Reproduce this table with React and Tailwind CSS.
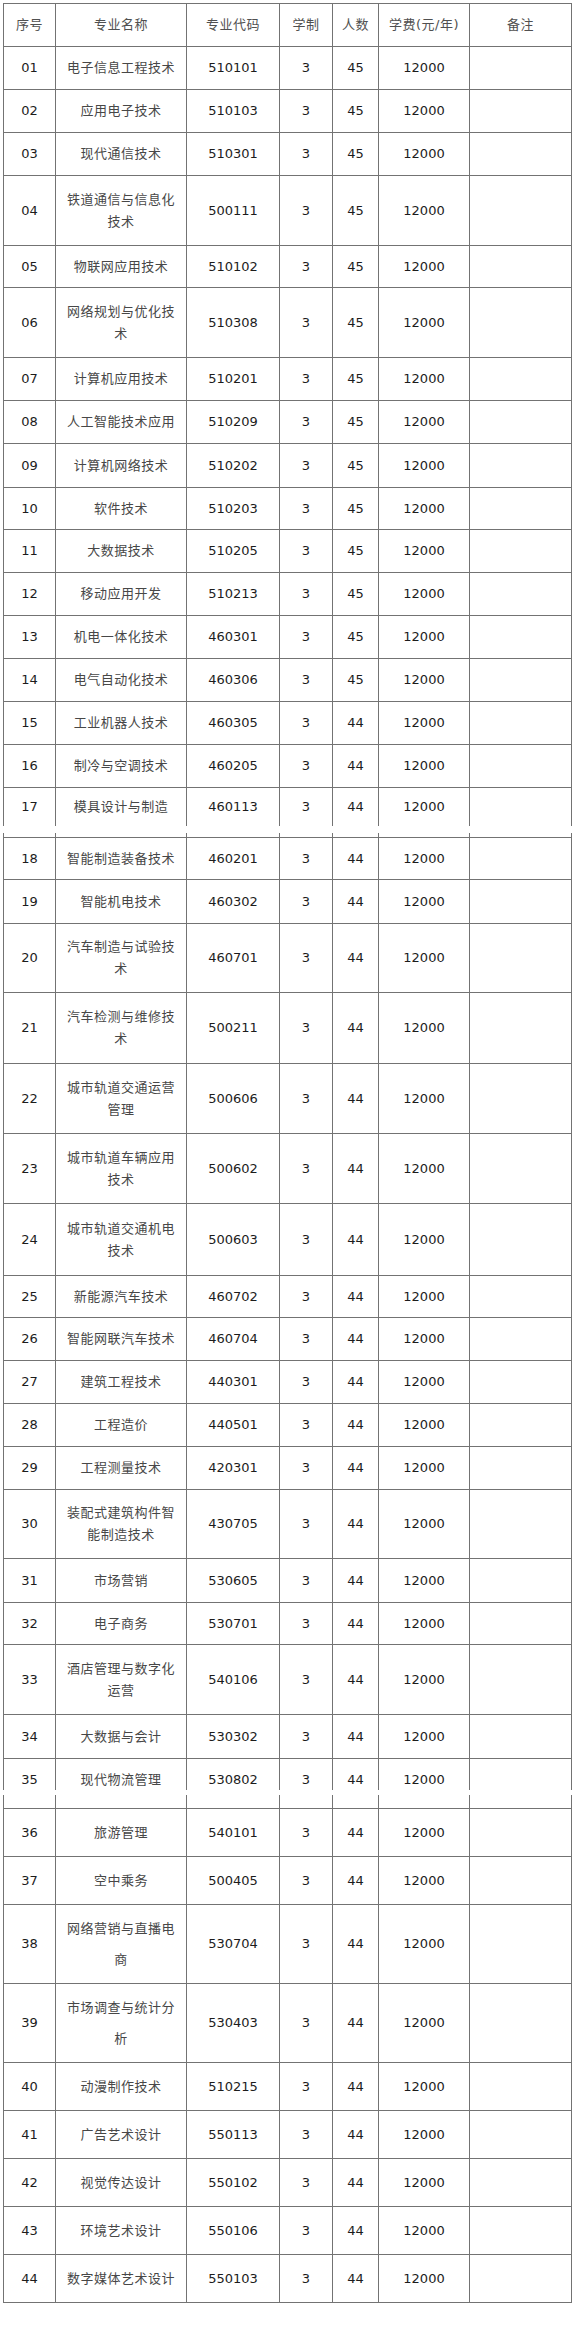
import React from "react";

const W = [
  "w-[52px]",
  "w-[131px]",
  "w-[93px]",
  "w-[53px]",
  "w-[46px]",
  "w-[91px]",
  "w-[102px]",
];

const t1 = [
  ["01", ["电子信息工程技术"], "510101", "45", "h-[43px]"],
  ["02", ["应用电子技术"], "510103", "45", "h-[43px]"],
  ["03", ["现代通信技术"], "510301", "45", "h-[43px]"],
  ["04", ["铁道通信与信息化", "技术"], "500111", "45", "h-[70px]"],
  ["05", ["物联网应用技术"], "510102", "45", "h-[42px]"],
  ["06", ["网络规划与优化技", "术"], "510308", "45", "h-[70px]"],
  ["07", ["计算机应用技术"], "510201", "45", "h-[43px]"],
  ["08", ["人工智能技术应用"], "510209", "45", "h-[43px]"],
  ["09", ["计算机网络技术"], "510202", "45", "h-[44px]"],
  ["10", ["软件技术"], "510203", "45", "h-[42px]"],
  ["11", ["大数据技术"], "510205", "45", "h-[43px]"],
  ["12", ["移动应用开发"], "510213", "45", "h-[43px]"],
  ["13", ["机电一体化技术"], "460301", "45", "h-[43px]"],
  ["14", ["电气自动化技术"], "460306", "45", "h-[43px]"],
  ["15", ["工业机器人技术"], "460305", "44", "h-[43px]"],
  ["16", ["制冷与空调技术"], "460205", "44", "h-[43px]"],
];
const t1last = ["17", ["模具设计与制造"], "460113", "44", "h-[38px]"];

const t2 = [
  ["18", ["智能制造装备技术"], "460201", "44", "h-[42px]"],
  ["19", ["智能机电技术"], "460302", "44", "h-[44px]"],
  ["20", ["汽车制造与试验技", "术"], "460701", "44", "h-[69px]"],
  ["21", ["汽车检测与维修技", "术"], "500211", "44", "h-[71px]"],
  ["22", ["城市轨道交通运营", "管理"], "500606", "44", "h-[70px]"],
  ["23", ["城市轨道车辆应用", "技术"], "500602", "44", "h-[70px]"],
  ["24", ["城市轨道交通机电", "技术"], "500603", "44", "h-[72px]"],
  ["25", ["新能源汽车技术"], "460702", "44", "h-[42px]"],
  ["26", ["智能网联汽车技术"], "460704", "44", "h-[43px]"],
  ["27", ["建筑工程技术"], "440301", "44", "h-[43px]"],
  ["28", ["工程造价"], "440501", "44", "h-[43px]"],
  ["29", ["工程测量技术"], "420301", "44", "h-[43px]"],
  ["30", ["装配式建筑构件智", "能制造技术"], "430705", "44", "h-[69px]"],
  ["31", ["市场营销"], "530605", "44", "h-[44px]"],
  ["32", ["电子商务"], "530701", "44", "h-[42px]"],
  ["33", ["酒店管理与数字化", "运营"], "540106", "44", "h-[70px]"],
  ["34", ["大数据与会计"], "530302", "44", "h-[44px]"],
];
const t2last = ["35", ["现代物流管理"], "530802", "44", "h-[31px]"];

const t3 = [
  ["36", ["旅游管理"], "540101", "44", "h-[48px]"],
  ["37", ["空中乘务"], "500405", "44", "h-[48px]"],
  ["38", ["网络营销与直播电", "商"], "530704", "44", "h-[79px]"],
  ["39", ["市场调查与统计分", "析"], "530403", "44", "h-[79px]"],
  ["40", ["动漫制作技术"], "510215", "44", "h-[48px]"],
  ["41", ["广告艺术设计"], "550113", "44", "h-[48px]"],
  ["42", ["视觉传达设计"], "550102", "44", "h-[48px]"],
  ["43", ["环境艺术设计"], "550106", "44", "h-[48px]"],
  ["44", ["数字媒体艺术设计"], "550103", "44", "h-[48px]"],
];

const num = "font-['DejaVu_Sans','Noto_Sans_CJK_SC',sans-serif] text-[13px] text-[#1c1c1c]";
const cjk = "font-['DejaVu_Sans','Noto_Sans_CJK_SC',sans-serif] text-[13px] tracking-[0.5px] text-[#474747]";

function Cell({ i, children, inner }) {
  return (
    <div className={`${W[i]} shrink-0 border-r border-[#737373] h-full overflow-hidden`}>
      <div className={`${inner || "h-full"} flex items-center justify-center text-center`}>
        {children}
      </div>
    </div>
  );
}

function Row({ r, bottom = true, lh = "leading-[22px]", inner }) {
  const [no, name, code, cnt, h] = r;
  return (
    <div className={`flex ${h} ${bottom ? "border-b border-[#737373]" : ""}`}>
      <Cell i={0} inner={inner}><span className={num}>{no}</span></Cell>
      <Cell i={1} inner={inner}>
        <div className={`${cjk} ${lh} flex flex-col items-center`}>
          {name.map((l, k) => (
            <span key={k}>{l}</span>
          ))}
        </div>
      </Cell>
      <Cell i={2} inner={inner}><span className={num}>{code}</span></Cell>
      <Cell i={3} inner={inner}><span className={num}>3</span></Cell>
      <Cell i={4} inner={inner}><span className={num}>{cnt}</span></Cell>
      <Cell i={5} inner={inner}><span className={num}>12000</span></Cell>
      <Cell i={6} inner={inner}><span></span></Cell>
    </div>
  );
}

function Stub({ h }) {
  return (
    <div className={`flex ${h} border-b border-[#737373]`}>
      {W.map((w, i) => (
        <div key={i} className={`${w} shrink-0 border-r border-[#737373] h-full`} />
      ))}
    </div>
  );
}

function Header() {
  const hd = "font-['DejaVu_Sans','Noto_Sans_CJK_SC',sans-serif] text-[13px] tracking-[0.5px] text-[#505050]";
  const labels = ["序号", "专业名称", "专业代码", "学制", "人数", "学费(元/年)", "备注"];
  return (
    <div className="flex h-[43px] border-b border-[#737373]">
      {labels.map((l, i) => (
        <Cell key={i} i={i}>
          <span className={hd}>{l}</span>
        </Cell>
      ))}
    </div>
  );
}

export default function App() {
  return (
    <div className="w-[574px] h-[2330px] bg-white pt-[3px] overflow-hidden">
      <div className="ml-[3px] w-[569px] border-l border-t border-[#737373]">
        <Header />
        {t1.map((r) => (
          <Row key={r[0]} r={r} />
        ))}
        <Row r={t1last} bottom={false} />
      </div>
      <div className="ml-[3px] mt-[7px] w-[569px] border-l border-[#737373]">
        <Stub h="h-[5px]" />
        {t2.map((r) => (
          <Row key={r[0]} r={r} />
        ))}
        <Row r={t2last} bottom={false} inner="h-[42px]" />
      </div>
      <div className="ml-[3px] mt-[5px] w-[569px] border-l border-[#737373]">
        <Stub h="h-[14px]" />
        {t3.map((r) => (
          <Row key={r[0]} r={r} lh="leading-[31px]" />
        ))}
      </div>
    </div>
  );
}
